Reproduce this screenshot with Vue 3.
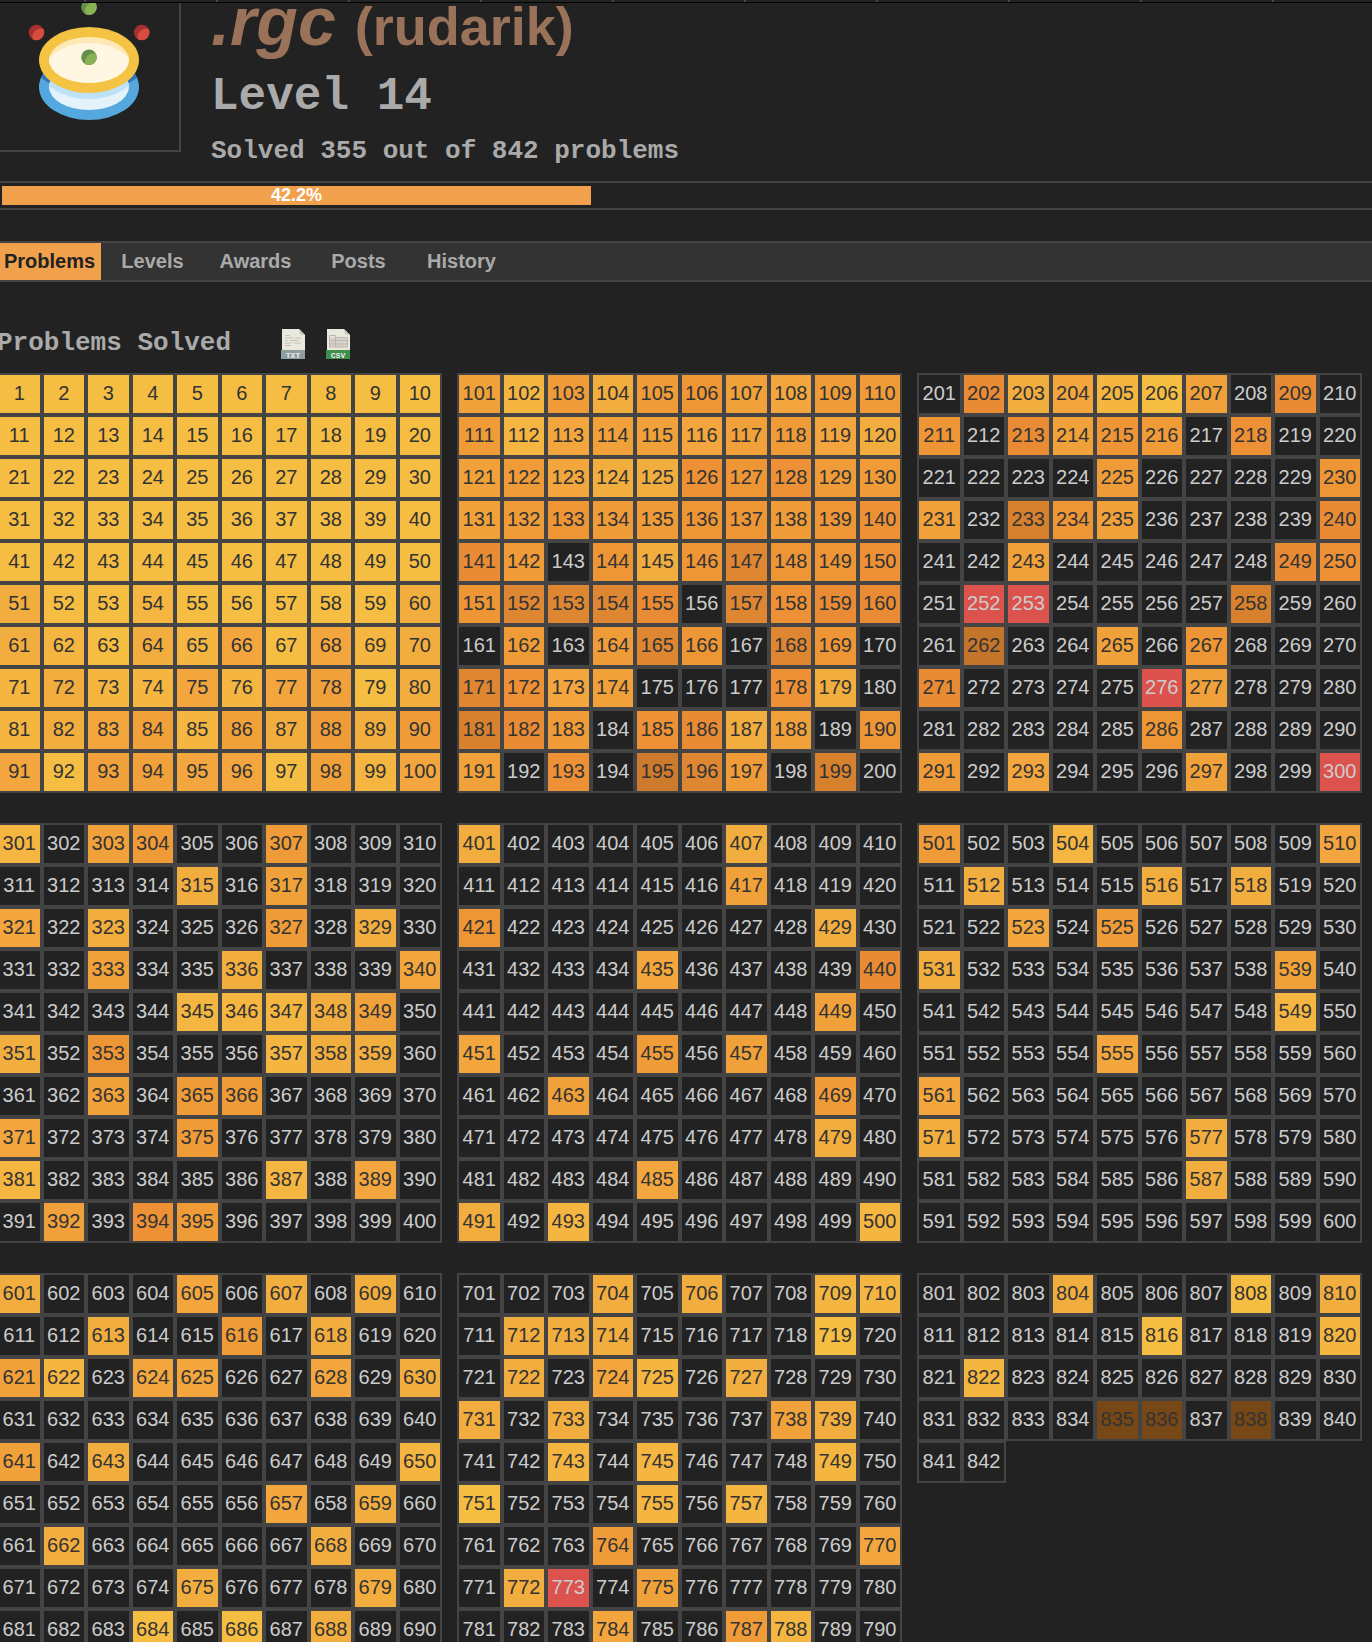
<script setup>
const solved = 355
const total = 842
const percent = '42.2%'

const tabs = ['Problems', 'Levels', 'Awards', 'Posts', 'History']

// One character per problem, ten per row.
// "." unsolved, a-m solved (easy to hard), R red, B recently published.
const charts = [
  ['aaaaaaaaaa', 'aaaaaaaaaa', 'aaaaaaaaaa', 'aaaaaaaaaa', 'aaaaaaaaaa', 'caabaaaaac', 'cbacbdadbc', 'bcbbdbdeac', 'bcdebecfcf', 'daeeddaebd'],
  ['ebfcfgedff', 'fbdeedefdc', 'efdcchghff', 'efgffggfgh', 'if.gcgjggh', 'gjjji.jhii', '.f.fjg.jg.', 'jhde...hc.', 'kif.hice.g', 'e.h.ljf.k.'],
  ['.icdbae.i.', 'g.iegf.h..', '....f....g', 'e.kge....i', '..e.....ih', '.RR....k..', '.m..e.g...', 'i....Re...', '.....g....', 'f.d...e..R'],
  ['b.ef..f...', '....c.e...', 'd.c...f.c.', '..e..c...d', '....bbbce.', 'c.g...bcc.', '..e.ff....', 'd...f.....', 'b.....b.d.', '.e.hf.....'],
  ['c.....c...', '......e...', 'g.......c.', '....d....i', '........e.', 'd...f.e...', '..e.....f.', '........c.', '....d.....', 'c.b......b'],
  ['f..b.....d', '.c...c.c..', '..d.f.....', 'c.......e.', '........b.', '....d.....', 'd.........', 'c.....c...', '......c...', '..........'],
  ['c...d.c.c.', '..c..f.c..', 'eb.dd..d.c', '..........', 'e.c......b', '......d.c.', '.c.....c..', '....c...c.', '...a.a.c..'],
  ['...c.c..bb', '.ccc....a.', '.c.db.c...', 'c.c....ec.', '..b.b...b.', 'a...b.b...', '...f.....d', '.cR.e.....', '...d..fb..'],
  ['...c...a.c', '.....a...b', '.b........', '....BB.B..', '..'],
].map((rows, chart) =>
  rows.map((row, r) =>
    [...row].map((mark, c) => ({
      id: chart * 100 + r * 10 + c + 1,
      tone: mark === '.' ? 'open' : 'tone-' + mark,
    })),
  ),
)
</script>

<template>
  <div class="page">
    <div class="menu-edge"></div>

    <header class="profile">
      <div class="avatar">
        <svg width="179" height="147" viewBox="0 3 179 147" role="img" aria-label="Level award">
          <defs>
            <clipPath id="cream"><ellipse cx="89" cy="60" rx="40" ry="23" /></clipPath>
            <clipPath id="ice"><ellipse cx="89" cy="87" rx="40" ry="23" /></clipPath>
            <clipPath id="base"><ellipse cx="89" cy="87" rx="50" ry="33" /></clipPath>
            <clipPath id="b1"><circle cx="89" cy="7.3" r="7.8" /></clipPath>
            <clipPath id="b2"><circle cx="36.4" cy="32.5" r="7.8" /></clipPath>
            <clipPath id="b3"><circle cx="141.7" cy="32.5" r="7.8" /></clipPath>
            <clipPath id="b4"><circle cx="89" cy="57.3" r="7.8" /></clipPath>
          </defs>
          <ellipse cx="89" cy="87" rx="50" ry="33" fill="#55a8dd" />
          <ellipse cx="89" cy="62" rx="56" ry="30" fill="#2f74bb" clip-path="url(#base)" />
          <g clip-path="url(#ice)">
            <rect x="40" y="60" width="100" height="60" fill="#e4f2fc" />
            <ellipse cx="89" cy="66" rx="50" ry="33" fill="#bde1f6" />
          </g>
          <ellipse cx="89" cy="60" rx="50" ry="33" fill="#f5c344" />
          <g clip-path="url(#cream)">
            <rect x="40" y="30" width="100" height="60" fill="#fce9b6" />
            <ellipse cx="89" cy="70" rx="44" ry="27" fill="#fff7e1" />
          </g>
          <g clip-path="url(#b1)">
            <rect x="80" y="-2" width="18" height="18" fill="#658f4a" />
            <circle cx="93.5" cy="11" r="8.6" fill="#88b153" />
          </g>
          <g clip-path="url(#b2)">
            <rect x="28" y="24" width="18" height="18" fill="#a5302f" />
            <circle cx="40.9" cy="37" r="8.6" fill="#d64c40" />
          </g>
          <g clip-path="url(#b3)">
            <rect x="133" y="24" width="18" height="18" fill="#a5302f" />
            <circle cx="146.2" cy="37" r="8.6" fill="#d64c40" />
          </g>
          <g clip-path="url(#b4)">
            <rect x="80" y="48" width="18" height="18" fill="#658f4a" />
            <circle cx="93.5" cy="61.8" r="8.6" fill="#88b153" />
          </g>
        </svg>
      </div>
      <div class="summary">
        <h1 class="name"><em>.rgc</em> (rudarik)</h1>
        <h2 class="level">Level 14</h2>
        <h3 class="count">Solved {{ solved }} out of {{ total }} problems</h3>
      </div>
    </header>

    <div class="progress">
      <div class="bar" :style="{ width: percent }">{{ percent }}</div>
    </div>

    <nav class="tabs">
      <a v-for="(tab, i) in tabs" :key="tab" href="#" class="tab" :class="{ active: i === 0 }">{{ tab }}</a>
    </nav>

    <main>
      <div class="heading">
        <h3>Problems Solved</h3>
        <div class="downloads">
          <a href="#" aria-label="Download as text">
            <svg width="24" height="30" viewBox="0 0 24 30">
              <path d="M1 0H18L24 6V22H1Z" fill="#e9e8de" />
              <path d="M18 0L24 6L19 5.500Z" fill="#c9c8bf" />
              <path d="M4 6.500H9M4 9H12M14 9H20M4 11.500H7M9 11.500H18M4 14H11M13 14H20M4 16.500H10" stroke="#c9c0b8" />
              <path d="M0 21H24V30H0Z" fill="#8f9d9f" />
              <text x="12" y="28.500" text-anchor="middle" class="ext">TXT</text>
            </svg>
          </a>
          <a href="#" aria-label="Download as CSV">
            <svg width="24" height="30" viewBox="0 0 24 30">
              <path d="M1 0H18L24 6V22H1Z" fill="#e9e8de" />
              <path d="M18 0L24 6L19 5.500Z" fill="#c9c8bf" />
              <path d="M4 8.500H21V18H4Z" fill="#d8d2cd" />
              <path d="M3.500 6.500H9.500V18H3.500ZM9.500 8.500H21.500V18H9.500M3.500 11.500H21.500M3.500 15H21.500" fill="none" stroke="#bdb5ae" />
              <path d="M0 21H24V30H0Z" fill="#3f8f4c" />
              <text x="12" y="28.500" text-anchor="middle" class="ext">CSV</text>
            </svg>
          </a>
        </div>
      </div>

      <div class="charts">
        <table v-for="(rows, t) in charts" :key="t" class="chart">
          <colgroup><col v-for="n in 10" :key="n" /></colgroup>
          <tbody>
            <tr v-for="(row, r) in rows" :key="r">
              <td v-for="cell in row" :key="cell.id" :class="cell.tone">
                <a href="#">{{ cell.id }}</a>
              </td>
            </tr>
          </tbody>
        </table>
      </div>
    </main>
  </div>
</template>

<style>
body {
  margin: 0;
  background: #222;
}
</style>

<style scoped>
.page {
  height: 100vh;
  overflow: hidden;
  background: #222;
  color: #aaa;
  font-family: Arial, "Liberation Sans", sans-serif;
}

h1,
h2,
h3 {
  margin: 0;
  font-weight: bold;
}

a {
  color: inherit;
  text-decoration: none;
}

.menu-edge {
  height: 2px;
  border-bottom: 1px solid #000;
  background: repeating-linear-gradient(90deg, #444 0 2px, #222 2px 132px) 84px 0 no-repeat;
}

.profile {
  display: flex;
  align-items: flex-start;
  gap: 30px;
}

.avatar {
  border: solid #444;
  border-width: 0 2px 2px 0;
}

.avatar svg {
  display: block;
}

.summary {
  padding-bottom: 15px;
}

.name {
  height: 36px;
  color: #997259;
  font-size: 54px;
  line-height: 36px;
}

.name em {
  margin-right: 4px;
  font-size: 68px;
}

.level,
.count,
.heading h3 {
  font-family: "Courier New", "Liberation Mono", monospace;
}

.level {
  margin-top: 30px;
  font-size: 46px;
  line-height: 56px;
}

.count {
  margin-top: 11px;
  font-size: 26px;
  line-height: 30px;
}

.progress {
  margin-right: -26px;
  padding: 3px 0 3px 2px;
  border: solid #444;
  border-width: 2px 0;
}

.bar {
  background: #f1a04b;
  color: #fff;
  font-size: 18px;
  font-weight: bold;
  line-height: 19px;
  text-align: center;
}

.tabs {
  display: flex;
  margin-top: 31px;
  margin-left: -2px;
  border: solid #444;
  border-width: 2px 0;
  background: #333;
}

.tab {
  width: 103px;
  font-size: 20px;
  font-weight: bold;
  line-height: 37px;
  text-align: center;
}

.tab.active {
  background: #f1a04b;
  color: #222;
}

main {
  margin: 45px 10px 0 -3px;
}

.heading {
  display: flex;
  align-items: flex-end;
  gap: 50px;
  height: 32px;
}

.heading h3 {
  font-size: 26px;
  line-height: 32px;
}

.downloads {
  display: flex;
  gap: 21px;
}

.downloads svg {
  display: block;
}

.ext {
  fill: #e8ecec;
  font: bold 8px "Liberation Mono", monospace;
}

.charts {
  display: grid;
  grid-template-columns: repeat(3, minmax(0, 1fr));
  align-items: start;
  gap: 30px 15px;
  margin-top: 14px;
}

.chart {
  width: 100%;
  table-layout: fixed;
  border-spacing: 0;
  font-size: 20px;
}

td {
  box-sizing: border-box;
  height: 42px;
  padding: 0;
  border: 2px solid #444;
  color: #333;
  text-align: center;
}

td a {
  display: block;
  padding-bottom: 2px;
  line-height: 36px;
}

.open,
.tone-R {
  color: #ccc;
}

.tone-a { background: #f5bd42; }
.tone-b { background: #f4b541; }
.tone-c { background: #f2ad3f; }
.tone-d { background: #f2a63d; }
.tone-e { background: #f0a13a; }
.tone-f { background: #ef9b38; }
.tone-g { background: #ee9536; }
.tone-h { background: #ee9035; }
.tone-i { background: #e98b35; }
.tone-j { background: #de8631; }
.tone-k { background: #d7812f; }
.tone-l { background: #ce7a2c; }
.tone-m { background: #c5752b; }
.tone-R { background: #dc524d; }
.tone-B { background: #774715; }
</style>
